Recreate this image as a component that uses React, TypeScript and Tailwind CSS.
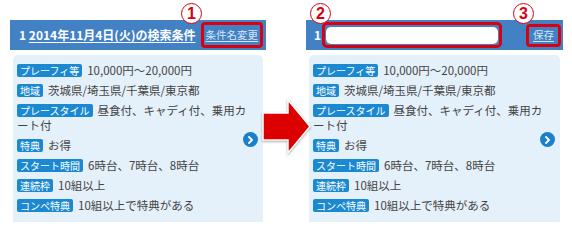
import React from "react";

type Row = { label: string; value: string };

const rows: Row[] = [
  { label: "プレーフィ等", value: "10,000円〜20,000円" },
  { label: "地域", value: "茨城県/埼玉県/千葉県/東京都" },
  { label: "プレースタイル", value: "昼食付、キャディ付、乗用カート付" },
  { label: "特典", value: "お得" },
  { label: "スタート時間", value: "6時台、7時台、8時台" },
  { label: "連続枠", value: "10組以上" },
  { label: "コンペ特典", value: "10組以上で特典がある" },
];

const font = "font-['Noto_Sans_CJK_JP',sans-serif]";

export default function App() {
  return (
    <div
      lang="ja"
      className={`relative flex h-[222px] w-[572px] overflow-hidden bg-white ${font}`}
    >
      {/* before */}
      <div className="ml-[10px] w-[256px] pt-[20px]">
        <header className="flex h-[30px] items-center justify-between bg-[#4281c3] pl-[9px] pr-[3px]">
          <span className="text-[12px] font-bold leading-none text-white">
            1 <span className="underline underline-offset-2">2014年11月4日(火)の検索条件</span>
          </span>
          <span className="flex h-[26px] items-center rounded-[4px] border-[3px] border-[#d90010] px-[2px]">
            <span className="text-[10.5px] leading-none text-[#d6e5f5] underline underline-offset-2">
              条件名変更
            </span>
          </span>
        </header>
        <ConditionPanel />
      </div>

      {/* after */}
      <div className="ml-[40px] w-[257px] pt-[20px]">
        <header className="flex h-[30px] items-center bg-[#4281c3] pl-[8px] pr-[2px]">
          <span className="text-[12px] font-bold leading-none text-white">1</span>
          <span className="ml-[1px] flex h-[26px] w-[180px] items-center rounded-[5px] border-[3px] border-[#d90010] p-[1px]">
            <span className="block h-[17px] w-full rounded-[5px] bg-white" />
          </span>
          <span className="ml-auto flex h-[23px] w-[35px] items-center justify-center rounded-[4px] border-[3px] border-[#d90010]">
            <span className="text-[10.5px] leading-none text-[#d6e5f5] underline underline-offset-2">
              保存
            </span>
          </span>
        </header>
        <ConditionPanel />
      </div>

      <StepBadge n="1" className="left-[181px] top-[3px]" />
      <StepBadge n="2" className="left-[310px] top-[3px]" />
      <StepBadge n="3" className="left-[513px] top-[3px]" />

      <svg
        className="absolute left-[258px] top-[95px] drop-shadow-[0_1px_1px_rgba(0,0,0,0.35)]"
        width="58"
        height="64"
        viewBox="0 0 58 64"
      >
        <polygon
          points="5,18 30,18 30,5 52,31.5 30,58 30,45 5,45"
          fill="#dc0000"
          stroke="#ffffff"
          strokeWidth="1.5"
          strokeLinejoin="miter"
        />
      </svg>
    </div>
  );
}

function ConditionPanel() {
  return (
    <section className="relative mx-[3px] mt-[5px] rounded-[5px] bg-[#e4f0fa] pb-[7px] pl-[4px] pr-[12px] pt-[8px]">
      {rows.map((row) => (
        <p
          key={row.label}
          className="mb-[5px] text-[11.5px] leading-[15px] text-[#444] [line-break:loose] last:mb-0"
        >
          <span className="mr-[5px] mt-[1px] inline-block rounded-[2px] bg-[#1b89d2] px-[3px] align-top text-[10px] leading-[13px] text-white">
            {row.label}
          </span>
          {row.value}
        </p>
      ))}
      <span className="absolute right-[5px] top-[77px] flex h-[15px] w-[15px] items-center justify-center rounded-full bg-[#1a80cc]">
        <svg width="7" height="8" viewBox="0 0 7 8">
          <path
            d="M2 1 L5 4 L2 7"
            fill="none"
            stroke="#ffffff"
            strokeWidth="1.8"
            strokeLinecap="round"
            strokeLinejoin="round"
          />
        </svg>
      </span>
    </section>
  );
}

function StepBadge({ n, className }: { n: string; className: string }) {
  return (
    <span
      className={`absolute flex h-[21px] w-[21px] items-center justify-center rounded-full border-[1.5px] border-[#d90010] bg-white font-['Liberation_Sans',sans-serif] text-[16px] font-bold leading-none text-[#d90010] ${className}`}
    >
      {n}
    </span>
  );
}
